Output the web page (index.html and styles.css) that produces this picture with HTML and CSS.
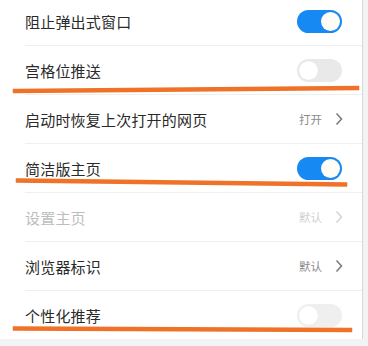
FILE: index.html
```html
<!DOCTYPE html>
<html lang="zh">
<head>
<meta charset="utf-8">
<link rel="stylesheet" href="styles.css">
</head>
<body>
<div class="page">
  <div class="list">
    <div class="row"><span class="label">阻止弹出式窗口</span><span class="toggle on"><span class="knob"></span></span></div>
    <div class="row"><span class="label">宫格位推送</span><span class="toggle off"><span class="knob"></span></span></div>
    <div class="row"><span class="label">启动时恢复上次打开的网页</span><span class="value">打开<svg class="chev" viewBox="0 0 8 14" width="8" height="14"><path d="M1.5 1.5 L6.5 7 L1.5 12.5" fill="none" stroke="currentColor" stroke-width="1.6"/></svg></span></div>
    <div class="row"><span class="label">简洁版主页</span><span class="toggle on"><span class="knob"></span></span></div>
    <div class="row disabled"><span class="label">设置主页</span><span class="value">默认<svg class="chev" viewBox="0 0 8 14" width="8" height="14"><path d="M1.5 1.5 L6.5 7 L1.5 12.5" fill="none" stroke="currentColor" stroke-width="1.6"/></svg></span></div>
    <div class="row"><span class="label">浏览器标识</span><span class="value">默认<svg class="chev" viewBox="0 0 8 14" width="8" height="14"><path d="M1.5 1.5 L6.5 7 L1.5 12.5" fill="none" stroke="currentColor" stroke-width="1.6"/></svg></span></div>
    <div class="row last"><span class="label">个性化推荐</span><span class="toggle off dim"><span class="knob"></span></span></div>
  </div>
  <svg class="marks" width="368" height="346" viewBox="0 0 368 346">
    <path d="M15 94 L357 91" stroke="#f07228" stroke-width="4.5" stroke-linecap="square"/>
    <path d="M18 183.5 L345 187.5" stroke="#f07228" stroke-width="4.5" stroke-linecap="square"/>
    <path d="M15 331.5 L350 333" stroke="#f07228" stroke-width="4.5" stroke-linecap="square"/>
  </svg>
</div>
</body>
</html>
```
FILE: styles.css
```css
html, body {
  margin: 0;
  padding: 0;
  background: #f3f3f3;
}
body {
  font-family: "Noto Sans CJK SC", "Noto Sans", sans-serif;
  width: 368px;
  height: 346px;
  overflow: hidden;
}
.page {
  position: relative;
  width: 368px;
  height: 346px;
}
.list {
  width: 363px;
  background: #fff;
  border-right: 1px solid #d8d8d8;
  margin-top: -3px;
  padding-left: 25px;
  box-sizing: border-box;
}
.row {
  height: 49px;
  display: flex;
  align-items: center;
  justify-content: space-between;
  padding-right: 20px;
  border-bottom: 1px solid #efefef;
  box-sizing: border-box;
}
.row.last {
  border-bottom: none;
  height: 48px;
}
.label {
  font-size: 15px;
  color: #2a2a2a;
  letter-spacing: 0.2px;
}
.disabled .label { color: #bdbdbd; }
.value {
  display: flex;
  align-items: center;
  gap: 13px;
  font-size: 11.5px;
  color: #8a8a8a;
  margin-right: -1px;
}
.disabled .value { color: #d0d0d0; }
.chev { color: #7d7d7d; }
.disabled .chev { color: #d5d5d5; }
.toggle {
  width: 45px;
  height: 23px;
  border-radius: 12px;
  display: flex;
  align-items: center;
  padding: 2px;
  box-sizing: border-box;
}
.toggle .knob {
  width: 19px;
  height: 19px;
  border-radius: 50%;
  background: #fff;
}
.toggle.on {
  background: #1789f2;
  justify-content: flex-end;
}
.toggle.on .knob {
  background: #fffdf6;
}
.toggle.off {
  background: #e9e9e9;
  justify-content: flex-start;
}
.toggle.off .knob {
  box-shadow: 0 0 1px rgba(0,0,0,0.08);
}
.toggle.dim {
  background: #ececec;
  opacity: 0.8;
}
.marks {
  position: absolute;
  left: 0;
  top: 0;
  pointer-events: none;
}
```
